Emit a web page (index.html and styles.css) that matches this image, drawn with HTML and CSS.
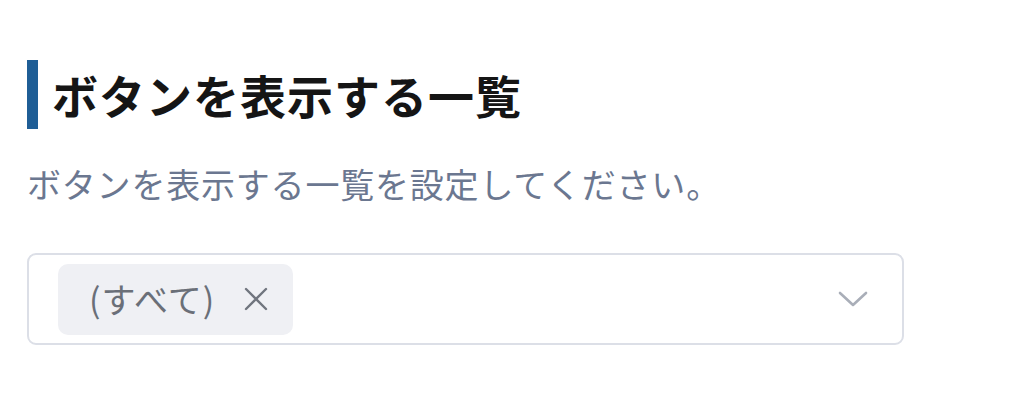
FILE: index.html
```html
<!DOCTYPE html>
<html lang="ja">
<head>
<meta charset="utf-8">
<link rel="stylesheet" href="styles.css">
</head>
<body>
<main class="section">
  <h2 class="title">ボタンを表示する一覧</h2>
  <p class="desc">ボタンを表示する一覧を設定してください。</p>
  <div class="select">
    <div class="tags">
      <span class="tag"><span class="tag-text">(すべて)</span><span class="tag-close"><svg width="26" height="26" viewBox="0 0 26 26"><path d="M3 3 L23 23 M23 3 L3 23" stroke="#70757e" stroke-width="2.4" fill="none" stroke-linecap="round"/></svg></span></span>
    </div>
    <span class="chevron"><svg width="30" height="18" viewBox="0 0 30 18"><path d="M2 3 L15 15 L28 3" stroke="#a9aeb8" stroke-width="2.6" fill="none" stroke-linecap="round" stroke-linejoin="round"/></svg></span>
  </div>
</main>
</body>
</html>
```
FILE: styles.css
```css
html, body {
  margin: 0;
  padding: 0;
  background: #ffffff;
}
body {
  font-family: "Noto Sans CJK JP", "Noto Sans", sans-serif;
}
.section {
  padding: 60px 0 0 27px;
  width: 877px;
}
.title {
  margin: 0;
  border-left: 11px solid #1f5e96;
  padding-left: 14px;
  height: 69px;
  line-height: 69px;
  font-size: 46px;
  font-weight: 700;
  letter-spacing: 1px;
  color: #151515;
}
.desc {
  margin: 25px 0 0 0;
  font-size: 34px;
  line-height: 60px;
  letter-spacing: 0.8px;
  color: #6b7790;
}
.select {
  margin-top: 39px;
  height: 88px;
  border: 2px solid #dcdfe7;
  border-radius: 9px;
  display: flex;
  align-items: center;
  justify-content: space-between;
  padding: 0 34px 0 29px;
}
.tags {
  display: flex;
  align-items: center;
}
.tag {
  display: flex;
  align-items: center;
  gap: 28px;
  height: 71px;
  padding: 0 24px 0 31px;
  background: #eff0f4;
  border-radius: 10px;
  color: #6a6f78;
  font-size: 34px;
}
.tag-text {
  line-height: 1;
  letter-spacing: 1px;
}
.tag-close {
  display: flex;
}
.chevron {
  display: flex;
}
```
